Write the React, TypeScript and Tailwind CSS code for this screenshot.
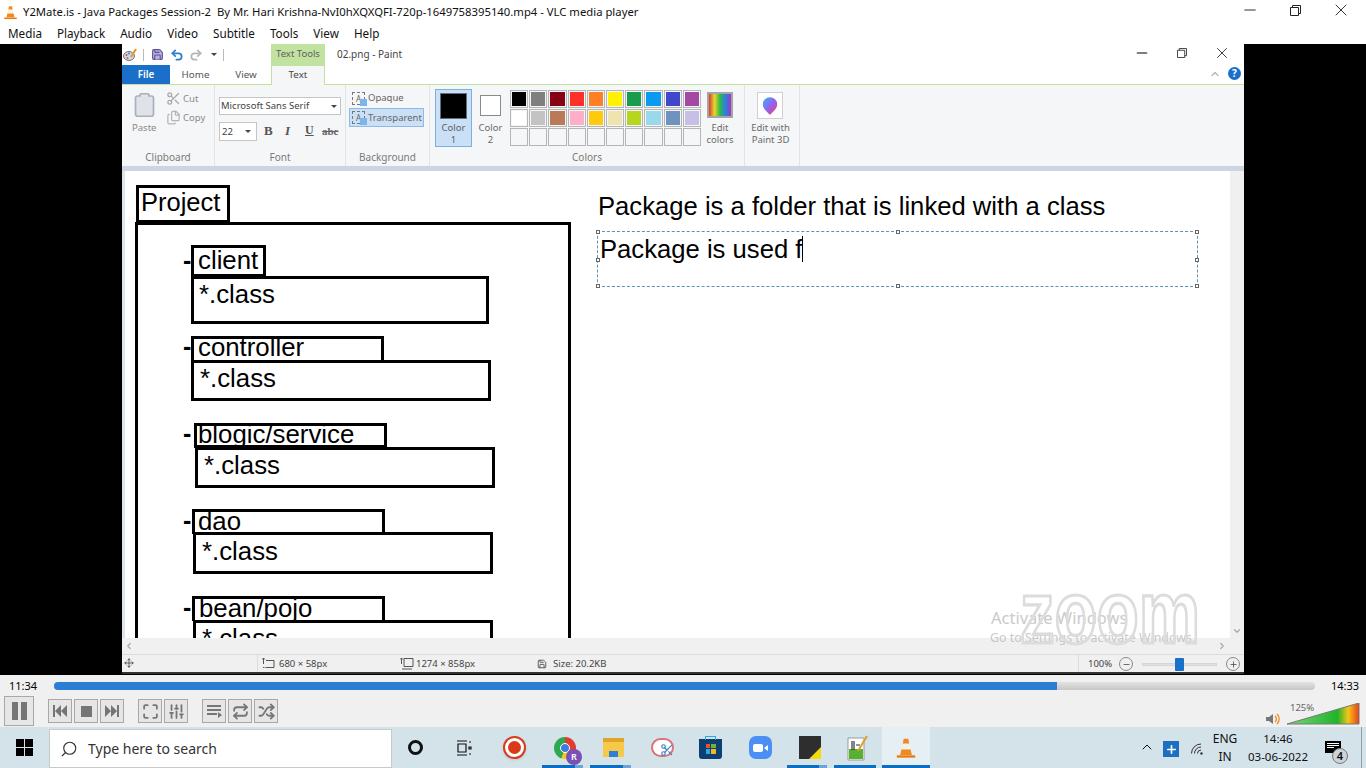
import { Minus, X, ChevronUp, ChevronDown, ChevronLeft, ChevronRight, Search, Plus, Clipboard, Scissors, Files, Save, Undo2, Redo2, Move, SlidersVertical, Repeat, Shuffle, Maximize } from 'lucide-react';

const ui = 'font-["Noto_Sans",sans-serif]';

const row1 = ['bg-[#000000]', 'bg-[#7f7f7f]', 'bg-[#880015]', 'bg-[#ff2f2a]', 'bg-[#ff7f27]', 'bg-[#fff200]', 'bg-[#1a9c4e]', 'bg-[#0a9bf0]', 'bg-[#3f48cc]', 'bg-[#a349a4]'];
const row2 = ['bg-[#ffffff]', 'bg-[#c3c3c3]', 'bg-[#b97a57]', 'bg-[#ffaec9]', 'bg-[#ffc90e]', 'bg-[#efe4b0]', 'bg-[#b5d61d]', 'bg-[#99d9ea]', 'bg-[#7092be]', 'bg-[#c8bfe7]'];
const row3 = Array(10).fill('bg-[#f5f6f7]');

function VlcCone({ className }: { className: string }) {
  return (
    <svg viewBox="0 0 24 24" className={className}>
      <path d="M9.5 2h5l1 5h-7z" fill="#f08a1d" />
      <path d="M8.2 8h7.6l1 5H7.2z" fill="#f4f0e8" />
      <path d="M7 13.5h10l1.4 6H5.6z" fill="#f08a1d" />
      <path d="M2 20h20v2.5H2z" fill="#e8780f" />
    </svg>
  );
}

function RestoreIcon({ className }: { className: string }) {
  return (
    <svg viewBox="0 0 11 11" className={className} fill="none" stroke="currentColor" strokeWidth="1">
      <path d="M2.5 2.5V.5h8v8h-2" />
      <path d="M.5 2.5h8v8h-8z" />
    </svg>
  );
}

function ColorRow({ colors }: { colors: string[] }) {
  return (
    <div className="flex gap-[1px]">
      {colors.map((c, i) => (
        <div key={i} className="w-[18.2px] h-[18px] border border-[#b5b5b5] p-[1px] bg-[#f5f6f7]">
          <div className={`w-full h-full ${c}`} />
        </div>
      ))}
    </div>
  );
}

function GroupLabel({ children }: { children: string }) {
  return <div className="absolute bottom-[2px] inset-x-0 text-center text-[10px] leading-[14px] text-[#7a7a7a]">{children}</div>;
}

function Ribbon() {
  return (
    <div className={`${ui} h-[81px] bg-[#f5f6f7] flex text-[#8a8a8a] text-[9.5px]`}>
      <div className="relative w-[93px] border-r border-[#e2e3e4] shrink-0">
        <Clipboard className="absolute left-[9px] top-[5px] w-[27px] h-[30px] text-[#a9b1bb]" strokeWidth={1.5} fill="#dfe3e8" />
        <div className="absolute left-[10px] top-[37px] leading-[12px]">Paste</div>
        <Scissors className="absolute left-[44px] top-[6px] w-[15px] h-[15px] text-[#a8a8a8]" />
        <div className="absolute left-[61px] top-[8px] leading-[12px]">Cut</div>
        <Files className="absolute left-[44px] top-[25px] w-[15px] h-[15px] text-[#b5b5b5]" />
        <div className="absolute left-[61px] top-[27px] leading-[12px]">Copy</div>
        <GroupLabel>Clipboard</GroupLabel>
      </div>
      <div className="relative w-[131px] border-r border-[#e2e3e4] shrink-0">
        <div className="absolute left-[4px] top-[12px] w-[122px] h-[18px] bg-white border border-[#c5c5c5] text-[#444] text-[9.5px] leading-[16px] pl-[1px] flex justify-between items-center pr-[3px]">
          Microsoft Sans Serif
          <div className="w-0 h-0 border-x-[3px] border-x-transparent border-t-[3px] border-t-[#444]" />
        </div>
        <div className="absolute left-[4px] top-[37px] w-[38px] h-[19px] bg-white border border-[#c5c5c5] text-[#444] leading-[17px] pl-[2px] flex justify-between items-center pr-[5px]">
          22
          <div className="w-0 h-0 border-x-[3px] border-x-transparent border-t-[3px] border-t-[#444]" />
        </div>
        <div className="absolute left-[49px] top-[38px] font-['Liberation_Serif',serif] font-bold text-[13px] leading-[16px] text-[#555]">B</div>
        <div className="absolute left-[70px] top-[38px] font-['Liberation_Serif',serif] italic font-bold text-[13px] leading-[16px] text-[#555]">I</div>
        <div className="absolute left-[90px] top-[38px] font-['Liberation_Serif',serif] font-bold text-[12px] leading-[15px] text-[#555] underline">U</div>
        <div className="absolute left-[107px] top-[39px] font-['Liberation_Serif',serif] text-[11px] font-bold leading-[14px] text-[#666] line-through">abc</div>
        <GroupLabel>Font</GroupLabel>
      </div>
      <div className="relative w-[84px] border-r border-[#e2e3e4] shrink-0">
        <div className="absolute left-[6px] top-[7px] w-[13px] h-[13px] border border-dashed border-[#777] text-[8px] leading-[11px] text-center text-[#666]">A</div>
        <div className="absolute left-[14px] top-[14px] w-[7px] h-[7px] bg-[#7db4ec]" />
        <div className="absolute left-[22px] top-[6px] leading-[14px] text-[#666] text-[9.5px]">Opaque</div>
        <div className="absolute left-[3px] top-[23px] w-[75px] h-[19px] bg-[#c9e0f7] border border-[#8fb9e3]" />
        <div className="absolute left-[6px] top-[26px] w-[13px] h-[13px] border border-dashed border-[#777] text-[8px] leading-[11px] text-center text-[#666]">A</div>
        <div className="absolute left-[14px] top-[33px] w-[7px] h-[7px] bg-[#7db4ec]" />
        <div className="absolute left-[22px] top-[26px] leading-[14px] text-[#666] text-[9.5px]">Transparent</div>
        <GroupLabel>Background</GroupLabel>
      </div>
      <div className="relative w-[315px] border-r border-[#e2e3e4] shrink-0">
        <div className="absolute left-[5px] top-[4px] w-[37px] h-[58px] bg-[#c9e0f7] border border-[#7fb0dd] flex flex-col items-center">
          <div className="mt-[3px] w-[27px] h-[27px] bg-black border border-[#5f6f80]" />
          <div className="text-center leading-[12px] text-[#5f5f5f] mt-[3px]">Color<br />1</div>
        </div>
        <div className="absolute left-[44px] top-[4px] w-[33px] flex flex-col items-center">
          <div className="mt-[6px] w-[21px] h-[21px] bg-white border border-[#8a8a8a]" />
          <div className="text-center leading-[12px] text-[#6a6a6a] mt-[6px]">Color<br />2</div>
        </div>
        <div className="absolute left-[80px] top-[5px] flex flex-col gap-[1px]">
          <ColorRow colors={row1} />
          <ColorRow colors={row2} />
          <ColorRow colors={row3} />
        </div>
        <div className="absolute left-[277px] top-[7px] w-[26px] h-[26px] border-2 border-[#a5a5a5] bg-[linear-gradient(90deg,#d63a3a,#e8d62a,#2fb84a,#2a7fe0,#a035c0)]" />
        <div className="absolute left-[271px] top-[37px] w-[38px] text-center leading-[12px] text-[#6a6a6a]">Edit<br />colors</div>
        <GroupLabel>Colors</GroupLabel>
      </div>
      <div className="relative w-[55px] border-r border-[#e2e3e4] shrink-0">
        <div className="absolute left-[12px] top-[7px] w-[26px] h-[27px] bg-white border border-[#d0d0d0] flex items-center justify-center">
          <svg viewBox="0 0 20 24" className="w-[16px] h-[20px]">
            <defs>
              <linearGradient id="p3d" x1="0" y1="0" x2="1" y2="1">
                <stop offset="0" stopColor="#31b5f0" />
                <stop offset="0.55" stopColor="#9a5cf0" />
                <stop offset="1" stopColor="#f0483c" />
              </linearGradient>
            </defs>
            <path d="M10 1a9 9 0 0 1 9 9c0 5-6 10-9 13C7 20 1 15 1 10a9 9 0 0 1 9-9z" fill="url(#p3d)" />
          </svg>
        </div>
        <div className="absolute left-0 top-[37px] w-[51px] text-center leading-[12px] text-[#6a6a6a]">Edit with<br />Paint 3D</div>
      </div>
    </div>
  );
}

function PaintCanvas() {
  return (
    <div className="relative flex-1 bg-white overflow-hidden border-l-[3px] border-l-[#dfe3f0] font-['Liberation_Sans',sans-serif] text-black">
      {/* drawing on the canvas, origin at 125,171 */}
      <div className="absolute left-[11px] top-[14px] w-[94px] h-[38px] border-[3px] border-black text-[25.5px] leading-[29px] pl-[2px]">Project</div>
      <div className="absolute left-[10px] top-[51px] w-[436px] h-[440px] border-[3px] border-black" />

      <div className="absolute left-[58px] top-[74px] font-bold text-[25px] leading-[30px]">-</div>
      <div className="absolute left-[66px] top-[74px] w-[75px] h-[32px] border-[3px] border-black text-[25.8px] leading-[24px] pl-[4px]">client</div>
      <div className="absolute left-[66px] top-[105px] w-[298px] h-[48px] border-[3px] border-black text-[25.8px] leading-[30px] pl-[5px]">*.class</div>

      <div className="absolute left-[58px] top-[160px] font-bold text-[25px] leading-[30px]">-</div>
      <div className="absolute left-[66px] top-[165px] w-[193px] h-[25px] border-[3px] border-black border-b-0 text-[25.8px] leading-[17px] pl-[4px]">controller</div>
      <div className="absolute left-[66px] top-[189px] w-[300px] h-[41px] border-[3px] border-black text-[25.8px] leading-[31px] pl-[6px]">*.class</div>

      <div className="absolute left-[58px] top-[247px] font-bold text-[25px] leading-[30px]">-</div>
      <div className="absolute left-[69px] top-[252px] w-[193px] h-[25px] border-[3px] border-black text-[25.8px] leading-[17px] pl-[1px]">blogic/service</div>
      <div className="absolute left-[70px] top-[276px] w-[300px] h-[41px] border-[3px] border-black text-[25.8px] leading-[30px] pl-[6px]">*.class</div>

      <div className="absolute left-[58px] top-[334px] font-bold text-[25px] leading-[30px]">-</div>
      <div className="absolute left-[67px] top-[338px] w-[193px] h-[25px] border-[3px] border-black border-b-0 text-[25.8px] leading-[19px] pl-[3px]">dao</div>
      <div className="absolute left-[68px] top-[361px] w-[300px] h-[42px] border-[3px] border-black text-[25.8px] leading-[33px] pl-[6px]">*.class</div>

      <div className="absolute left-[58px] top-[421px] font-bold text-[25px] leading-[30px]">-</div>
      <div className="absolute left-[67px] top-[425px] w-[193px] h-[25px] border-[3px] border-black border-b-0 text-[25.8px] leading-[19px] pl-[4px]">bean/pojo</div>
      <div className="absolute left-[68px] top-[449px] w-[300px] h-[42px] border-[3px] border-black text-[25.8px] leading-[30px] pl-[6px]">*.class</div>

      <div className="absolute left-[473px] top-[20px] text-[25.65px] leading-[30px] whitespace-nowrap">Package is a folder that is linked with a class</div>

      {/* text tool selection */}
      <div className="absolute left-[472px] top-[60px] w-[601px] h-[56px] border border-dashed border-[#5b93b8]">
        <div className="absolute left-[2px] top-[2px] text-[25.65px] leading-[30px] whitespace-nowrap">Package is used f</div>
        <div className="absolute left-[204px] top-[4px] w-[1px] h-[26px] bg-black" />
        <div className="absolute -left-[2px] -top-[2px] w-[4px] h-[4px] bg-white border border-[#666]" />
        <div className="absolute left-[298px] -top-[2px] w-[4px] h-[4px] bg-white border border-[#666]" />
        <div className="absolute -right-[2px] -top-[2px] w-[4px] h-[4px] bg-white border border-[#666]" />
        <div className="absolute -left-[2px] top-[26px] w-[4px] h-[4px] bg-white border border-[#666]" />
        <div className="absolute -right-[2px] top-[26px] w-[4px] h-[4px] bg-white border border-[#666]" />
        <div className="absolute -left-[2px] -bottom-[2px] w-[4px] h-[4px] bg-white border border-[#666]" />
        <div className="absolute left-[298px] -bottom-[2px] w-[4px] h-[4px] bg-white border border-[#666]" />
        <div className="absolute -right-[2px] -bottom-[2px] w-[4px] h-[4px] bg-white border border-[#666]" />
      </div>
    </div>
  );
}

function PaintWindow() {
  return (
    <div className={`${ui} relative w-[1122px] h-[630px] ml-[122px] bg-white flex flex-col border-b-2 border-b-[#333]`}>
      {/* title row */}
      <div className="h-[21px] flex items-center shrink-0 relative text-[#333]">
        <svg viewBox="0 0 14 14" className="w-[14px] h-[14px] ml-[1px]">
          <ellipse cx="6" cy="8" rx="5.5" ry="4.5" fill="#d8d4e4" stroke="#777" />
          <circle cx="3.5" cy="7" r="1" fill="#d9453a" />
          <circle cx="6" cy="5.5" r="1" fill="#3a7fd9" />
          <circle cx="4.5" cy="10" r="1" fill="#4aa84a" />
          <path d="M13 1L8 9" stroke="#e09a2a" strokeWidth="2" />
        </svg>
        <div className="w-px h-[12px] bg-[#bbb] ml-[6px]" />
        <Save className="w-[13px] h-[13px] ml-[7px] text-[#5c4f9c]" fill="#b9b2dd" />
        <Undo2 className="w-[14px] h-[14px] ml-[6px] text-[#2b7fd0]" strokeWidth={3} />
        <Redo2 className="w-[14px] h-[14px] ml-[5px] text-[#b5b5b5]" strokeWidth={3} />
        <div className="ml-[8px] w-[6px] border-t-[3px] border-t-[#444] border-x-[3px] border-x-transparent" />
        <div className="w-px h-[12px] bg-[#bbb] ml-[6px]" />
        <div className="ml-[47px] w-[54px] h-[21px] bg-[#c2e3a0] text-[9.5px] text-[#5f5f5f] leading-[19px] text-center">Text Tools</div>
        <div className="ml-[12px] text-[10px] text-[#444]">02.png - Paint</div>
        <Minus className="absolute left-[1012px] top-[1px] w-[16px] h-[16px] text-[#555]" />
        <RestoreIcon className="absolute left-[1055px] top-[4px] w-[10px] h-[10px] text-[#333]" />
        <X className="absolute left-[1091px] top-0 w-[18px] h-[18px] text-[#333]" strokeWidth={1.25} />
      </div>
      {/* tabs */}
      <div className="h-[20px] flex shrink-0 relative text-[9.8px] border-b border-b-[#c2e3a0]">
        <div className="w-[48px] bg-[#1a6fc9] text-white font-semibold text-center leading-[19px]">File</div>
        <div className="w-[51px] text-[#555] text-center leading-[19px]">Home</div>
        <div className="w-[50px] text-[#555] text-center leading-[19px]">View</div>
        <div className="w-[54px] h-[20px] bg-[#f5f6f7] border-x border-x-[#c2e3a0] border-t border-t-[#c2e3a0] text-[#444] text-center leading-[18px]">Text</div>
        <ChevronUp className="absolute left-[1087px] top-[3px] w-[12px] h-[12px] text-[#bbb]" strokeWidth={3} />
        <div className="absolute left-[1106px] top-[2px] w-[13px] h-[13px] rounded-full bg-[#1a6fc9] text-white text-[10px] font-bold leading-[13px] text-center">?</div>
      </div>
      <Ribbon />
      <div className="h-[5px] shrink-0 bg-[#cdd5e3]" />
      {/* canvas and right scrollbar */}
      <div className="flex-1 flex min-h-0">
        <PaintCanvas />
        <div className="w-[14px] bg-[#f0f0f0] flex flex-col justify-end items-center pb-[2px]">
          <ChevronDown className="w-[10px] h-[10px] text-[#aaa]" strokeWidth={3} />
        </div>
      </div>
      <div className="h-[16px] shrink-0 bg-[#f0f0f0] flex items-center justify-between px-[2px]">
        <ChevronLeft className="w-[10px] h-[10px] text-[#aaa]" strokeWidth={3} />
        <ChevronRight className="w-[10px] h-[10px] text-[#aaa] mr-[15px]" strokeWidth={3} />
      </div>
      {/* status bar */}
      <div className="h-[18px] shrink-0 bg-[#f0f0f0] border-t border-t-[#dcdcdc] flex items-center text-[9.5px] text-[#444] relative">
        <Move className="absolute left-[2px] top-[3px] w-[10px] h-[10px] text-[#444]" />
        <div className="absolute left-[135px] top-0 h-full w-px bg-[#dcdcdc]" />
        <svg viewBox="0 0 13 11" className="absolute left-[140px] top-[3px] w-[13px] h-[11px]" fill="none" stroke="#555">
          <path d="M1.5 0v6M0 1.5l1.5-1.5L3 1.5M4 2.5h8v7H5" strokeDasharray="none" />
          <path d="M1 9.5h10" strokeDasharray="1.5 1" />
        </svg>
        <div className="absolute left-[157px] top-[2px] leading-[14px]">680 × 58px</div>
        <svg viewBox="0 0 14 12" className="absolute left-[278px] top-[3px] w-[14px] h-[12px]" fill="none" stroke="#555">
          <path d="M1.5 0v6M0 1.5l1.5-1.5L3 1.5M4 .5h9v8H4zM2 11h10" />
        </svg>
        <div className="absolute left-[294px] top-[2px] leading-[14px]">1274 × 858px</div>
        <Save className="absolute left-[415px] top-[4px] w-[10px] h-[10px] text-[#444]" />
        <div className="absolute left-[431px] top-[2px] leading-[14px]">Size: 20.2KB</div>
        <div className="absolute left-[956px] top-0 h-full w-px bg-[#dcdcdc]" />
        <div className="absolute left-[966px] top-[2px] leading-[14px]">100%</div>
        <div className="absolute left-[997px] top-[2px] w-[14px] h-[14px] rounded-full border border-[#888] flex items-center justify-center"><Minus className="w-[9px] h-[9px]" /></div>
        <div className="absolute left-[1020px] top-[8px] w-[75px] h-[3px] bg-[#e2e2e2] border border-[#d5d5d5]" />
        <div className="absolute left-[1053px] top-[3px] w-[9px] h-[13px] bg-[#1a6fc9] rounded-[1px]" />
        <div className="absolute left-[1104px] top-[2px] w-[14px] h-[14px] rounded-full border border-[#888] flex items-center justify-center"><Plus className="w-[9px] h-[9px]" /></div>
      </div>
    </div>
  );
}

function CtlButton({ children }: { children: React.ReactNode }) {
  return <div className="w-[24px] h-[24px] bg-[#e6e6e6] border border-[#a8a8a8] flex items-center justify-center text-[#757575]">{children}</div>;
}

function VlcControls() {
  return (
    <div className={`${ui} relative h-[52px] shrink-0 bg-[#f0f0f0] px-[4px] text-black`}>
      <div className="flex items-center h-[21px] text-[11px]">
        <div className="w-[50px] pl-[5px] leading-[20px]">11:34</div>
        <div className="flex-none w-[1261px] h-[8px] rounded-[4px] bg-[linear-gradient(180deg,#e2e2e2,#c6c6c6)] overflow-hidden">
          <div className="w-[1003px] h-full bg-[#2a7fd4]" />
        </div>
        <div className="ml-[16px] leading-[20px]">14:33</div>
      </div>
      <div className="flex items-center">
        <div className="w-[30px] h-[30px] bg-[#e6e6e6] border border-[#a8a8a8] flex items-center justify-center gap-[3px]">
          <div className="w-[6px] h-[18px] bg-[#757575]" />
          <div className="w-[6px] h-[18px] bg-[#757575]" />
        </div>
        <div className="flex gap-[2px] ml-[14px]">
          <CtlButton>
            <svg viewBox="0 0 16 12" className="w-[16px] h-[12px]" fill="currentColor"><path d="M1 0h2v12H1zM9 0v12L3 6zM15 0v12L9 6z" /></svg>
          </CtlButton>
          <CtlButton><div className="w-[11px] h-[11px] bg-[#757575]" /></CtlButton>
          <CtlButton>
            <svg viewBox="0 0 16 12" className="w-[16px] h-[12px]" fill="currentColor"><path d="M15 0h-2v12h2zM7 0v12l6-6zM1 0v12l6-6z" /></svg>
          </CtlButton>
        </div>
        <div className="flex gap-[2px] ml-[14px]">
          <CtlButton><Maximize className="w-[17px] h-[17px]" strokeWidth={2.5} /></CtlButton>
          <CtlButton><SlidersVertical className="w-[17px] h-[17px]" strokeWidth={2.5} /></CtlButton>
        </div>
        <div className="flex gap-[2px] ml-[14px]">
          <CtlButton>
            <svg viewBox="0 0 16 14" className="w-[16px] h-[14px]" fill="currentColor"><path d="M1 1h14v2H1zM1 5h14v2H1zM1 9h10v2H1zM12 8l4 3-4 3z" /></svg>
          </CtlButton>
          <CtlButton><Repeat className="w-[17px] h-[17px]" strokeWidth={2.5} /></CtlButton>
          <CtlButton><Shuffle className="w-[17px] h-[17px]" strokeWidth={2.5} /></CtlButton>
        </div>
      </div>
      {/* volume */}
      <svg viewBox="0 0 16 16" className="absolute left-[1265px] top-[36px] w-[16px] h-[16px]">
        <path d="M1 6h3l4-3v10l-4-3H1z" fill="#777" />
        <path d="M10 5a4 4 0 0 1 0 6M12 3a7 7 0 0 1 0 10" fill="none" stroke="#f08a1d" strokeWidth="1.3" />
      </svg>
      <svg viewBox="0 0 74 22" preserveAspectRatio="none" className="absolute left-[1287px] top-[28px] w-[73px] h-[22px]">
        <defs>
          <linearGradient id="vol" x1="0" y1="0" x2="1" y2="0">
            <stop offset="0" stopColor="#7ad67a" />
            <stop offset="0.7" stopColor="#1fb52a" />
            <stop offset="0.85" stopColor="#f5c518" />
            <stop offset="1" stopColor="#e8401a" />
          </linearGradient>
        </defs>
        <path d="M0 21L73 0v21z" fill="url(#vol)" stroke="#777" strokeWidth="1" />
      </svg>
      <div className="absolute left-[1290px] top-[27px] text-[9.5px] leading-[12px] text-[#666]">125%</div>
    </div>
  );
}

function TaskIcon({ w, active, partial, children }: { w: string; active?: boolean; partial?: boolean; children: React.ReactNode }) {
  return (
    <div className={`relative h-full flex items-center justify-center shrink-0 ${w}`}>
      {children}
      {active && (
        <div className="absolute bottom-0 left-[1px] right-[6px] h-[3px] bg-[#0a6fc2] flex justify-end">
          {partial && <div className="w-[8px] h-full bg-[#6aa5d6]" />}
        </div>
      )}
    </div>
  );
}

function Taskbar() {
  return (
    <div className={`${ui} relative h-[41px] shrink-0 bg-[#d4e3ea] flex items-center text-[#111]`}>
      <div className="w-[49px] flex justify-center">
        <div className="grid grid-cols-2 gap-[1px] w-[17px] h-[17px]">
          <div className="bg-black" /><div className="bg-black" /><div className="bg-black" /><div className="bg-black" />
        </div>
      </div>
      <div className="w-[343px] h-[39px] mt-[2px] bg-white border border-[#c9c9c9] flex items-center pl-[10px] gap-[10px] text-[14px] text-[#333]">
        <Search className="w-[18px] h-[18px] -scale-x-100" strokeWidth={1.5} />
        Type here to search
      </div>
      <div className="flex items-center h-full ml-[-1px]">
        <TaskIcon w="w-[49px]"><div className="w-[15px] h-[15px] rounded-full border-[3px] border-[#111]" /></TaskIcon>
        <TaskIcon w="w-[48px]">
          <svg viewBox="0 0 16 16" className="w-[16px] h-[16px]" fill="none" stroke="#111" strokeWidth="1.2">
            <path d="M1 1h10M1 15h10M2 4h8v8H2z" />
            <path d="M13 2h2M13 7h2v2h-2zM13 14h2" />
          </svg>
        </TaskIcon>
        <TaskIcon w="w-[53px]">
          <div className="w-[23px] h-[23px] rounded-full bg-white border-2 border-[#d93a1a] flex items-center justify-center shadow-sm">
            <div className="w-[13px] h-[13px] rounded-full bg-[#d93a1a]" />
          </div>
        </TaskIcon>
        <TaskIcon w="w-[48px]" active partial>
          <div className="relative w-[22px] h-[22px] rounded-full bg-[conic-gradient(#e33b2e_0deg_120deg,#f5c518_120deg_200deg,#2fa84f_200deg_360deg)] flex items-center justify-center">
            <div className="w-[10px] h-[10px] rounded-full bg-[#3b7ddd] border border-white" />
            <div className="absolute -right-[6px] -bottom-[6px] w-[16px] h-[16px] rounded-full bg-[#7b4fb5] text-white text-[9px] font-semibold leading-[16px] text-center">R</div>
          </div>
        </TaskIcon>
        <TaskIcon w="w-[48px]" active partial>
          <div className="relative w-[21px] h-[19px] bg-[#f7c948] border-t-[4px] border-t-[#e0a526]">
            <div className="absolute left-[6px] bottom-0 w-[9px] h-[6px] bg-[#2f7fd2]" />
          </div>
        </TaskIcon>
        <TaskIcon w="w-[50px]">
          <div className="relative w-[23px] h-[19px] rounded-full border-2 border-[#d9747a] bg-white">
            <Scissors className="absolute left-[7px] top-[3px] w-[14px] h-[14px] text-[#3c82c4]" />
          </div>
        </TaskIcon>
        <TaskIcon w="w-[47px]">
          <div className="relative w-[23px] h-[20px] mt-[2px] rounded-b-[3px] bg-[#0d3f73] flex items-center justify-center">
            <div className="absolute -top-[3px] left-[6px] w-[11px] h-[4px] border border-b-0 border-[#2fa8e0]" />
            <div className="grid grid-cols-2 gap-[1px] w-[10px] h-[10px]">
              <div className="bg-[#e8532b]" /><div className="bg-[#6fb52c]" /><div className="bg-[#2fa8e0]" /><div className="bg-[#f5b81c]" />
            </div>
          </div>
        </TaskIcon>
        <TaskIcon w="w-[52px]">
          <div className="w-[23px] h-[23px] rounded-[7px] bg-[#4b8ff5] flex items-center justify-center gap-[1px]">
            <div className="w-[10px] h-[8px] rounded-[2px] bg-white" />
            <div className="w-0 h-0 border-y-[3px] border-y-transparent border-r-[4px] border-r-white" />
          </div>
        </TaskIcon>
        <TaskIcon w="w-[47px]" active partial>
          <div className="relative w-[22px] h-[23px] bg-[#2e2e2e] overflow-hidden">
            <div className="absolute right-0 bottom-0 w-0 h-0 border-l-[12px] border-l-transparent border-b-[12px] border-b-[#f5d90a]" />
          </div>
        </TaskIcon>
        <TaskIcon w="w-[49px]" active>
          <svg viewBox="0 0 22 26" className="w-[22px] h-[26px]">
            <path d="M1 3h16v22H1z" fill="#fff" stroke="#999" />
            <path d="M2 14h14v10H2z" fill="#58b030" />
            <path d="M5 6v9M7 6v9M9 10h4" stroke="#333" strokeWidth="1.2" />
            <path d="M20 1L11 16" stroke="#d9a02a" strokeWidth="2" />
          </svg>
        </TaskIcon>
        <div className="relative w-[48px] h-full bg-[#e6eff3] flex items-center justify-center shrink-0">
          <VlcCone className="w-[22px] h-[26px]" />
          <div className="absolute bottom-0 inset-x-0 h-[3px] bg-[#0a6fc2]" />
        </div>
      </div>
      <ChevronUp className="absolute left-[1139px] top-[12px] w-[16px] h-[16px]" strokeWidth={1.5} />
      <div className="absolute left-[1163px] top-[14px] w-[16px] h-[16px] bg-[#1f6fc0] text-white flex items-center justify-center">
        <Plus className="w-[13px] h-[13px]" strokeWidth={3} />
      </div>
      <svg viewBox="0 0 14 14" className="absolute left-[1190px] top-[15px] w-[14px] h-[14px]" fill="none" stroke="#333" strokeWidth="1">
        <circle cx="11.5" cy="11.5" r="1.2" fill="#333" stroke="none" />
        <path d="M11 8a3.5 3.5 0 0 0-3.5 3.5M11 5a6.5 6.5 0 0 0-6.5 6.5M11 2a9.5 9.5 0 0 0-9.5 9.5" />
      </svg>
      <div className="absolute left-[1209px] top-[3px] w-[32px] text-center text-[12px] leading-[18px]">ENG<br />IN</div>
      <div className="absolute left-[1246px] top-[3px] w-[64px] text-center text-[11.5px] leading-[18px]">14:46<br />03-06-2022</div>
      <div className="absolute left-[1325px] top-[14px] w-[16px] h-[12px] bg-black flex flex-col gap-[1px] p-[2px]">
        <div className="h-px bg-white" /><div className="h-px bg-white" /><div className="h-px bg-white w-[7px]" />
      </div>
      <div className="absolute left-[1332px] top-[21px] w-[16px] h-[16px] rounded-full bg-[#ccd4d8] border border-[#777] text-[11px] font-semibold leading-[14px] text-center">4</div>
      <div className="absolute left-[1361px] top-0 bottom-0 w-px bg-[#8fa1aa]" />
    </div>
  );
}

export default function App() {
  return (
    <div className={`${ui} relative w-[1366px] h-[768px] overflow-hidden flex flex-col bg-white`}>
      {/* VLC title bar */}
      <div className="h-[24px] shrink-0 flex items-center relative">
        <VlcCone className="w-[15px] h-[17px] ml-[3px]" />
        <div className="ml-[5px] text-[11.3px] text-[#111] whitespace-pre">Y2Mate.is - Java Packages Session-2  By Mr. Hari Krishna-NvI0hXQXQFI-720p-1649758395140.mp4 - VLC media player</div>
        <Minus className="absolute left-[1241px] top-[1px] w-[18px] h-[18px] text-[#222]" strokeWidth={1.25} />
        <RestoreIcon className="absolute left-[1290px] top-[5px] w-[11px] h-[11px] text-[#222]" />
        <X className="absolute left-[1331px] top-0 w-[20px] h-[20px] text-[#222]" strokeWidth={1.1} />
      </div>
      <div className="h-[20px] shrink-0 flex items-center gap-[15px] pl-[8px] text-[11.7px] text-[#111]">
        {['Media', 'Playback', 'Audio', 'Video', 'Subtitle', 'Tools', 'View', 'Help'].map((m) => (
          <span key={m}>{m}</span>
        ))}
      </div>
      {/* video area */}
      <div className="relative h-[631px] shrink-0 bg-black">
        <PaintWindow />
        <div className="absolute left-[991px] top-[564px] text-[16.5px] leading-[20px] text-[#bdbdbd] opacity-80">Activate Windows</div>
        <div className="absolute left-[990px] top-[586px] text-[12.4px] leading-[16px] text-[#bdbdbd] opacity-80">Go to Settings to activate Windows.</div>
        <div className="absolute left-[1020px] top-[535px] font-['Liberation_Sans',sans-serif] font-bold text-[69px] leading-[68px] scale-y-[1.3] text-transparent [-webkit-text-stroke:2.5px_#dcdcdc]">zoom</div>
      </div>
      <VlcControls />
      <Taskbar />
    </div>
  );
}
